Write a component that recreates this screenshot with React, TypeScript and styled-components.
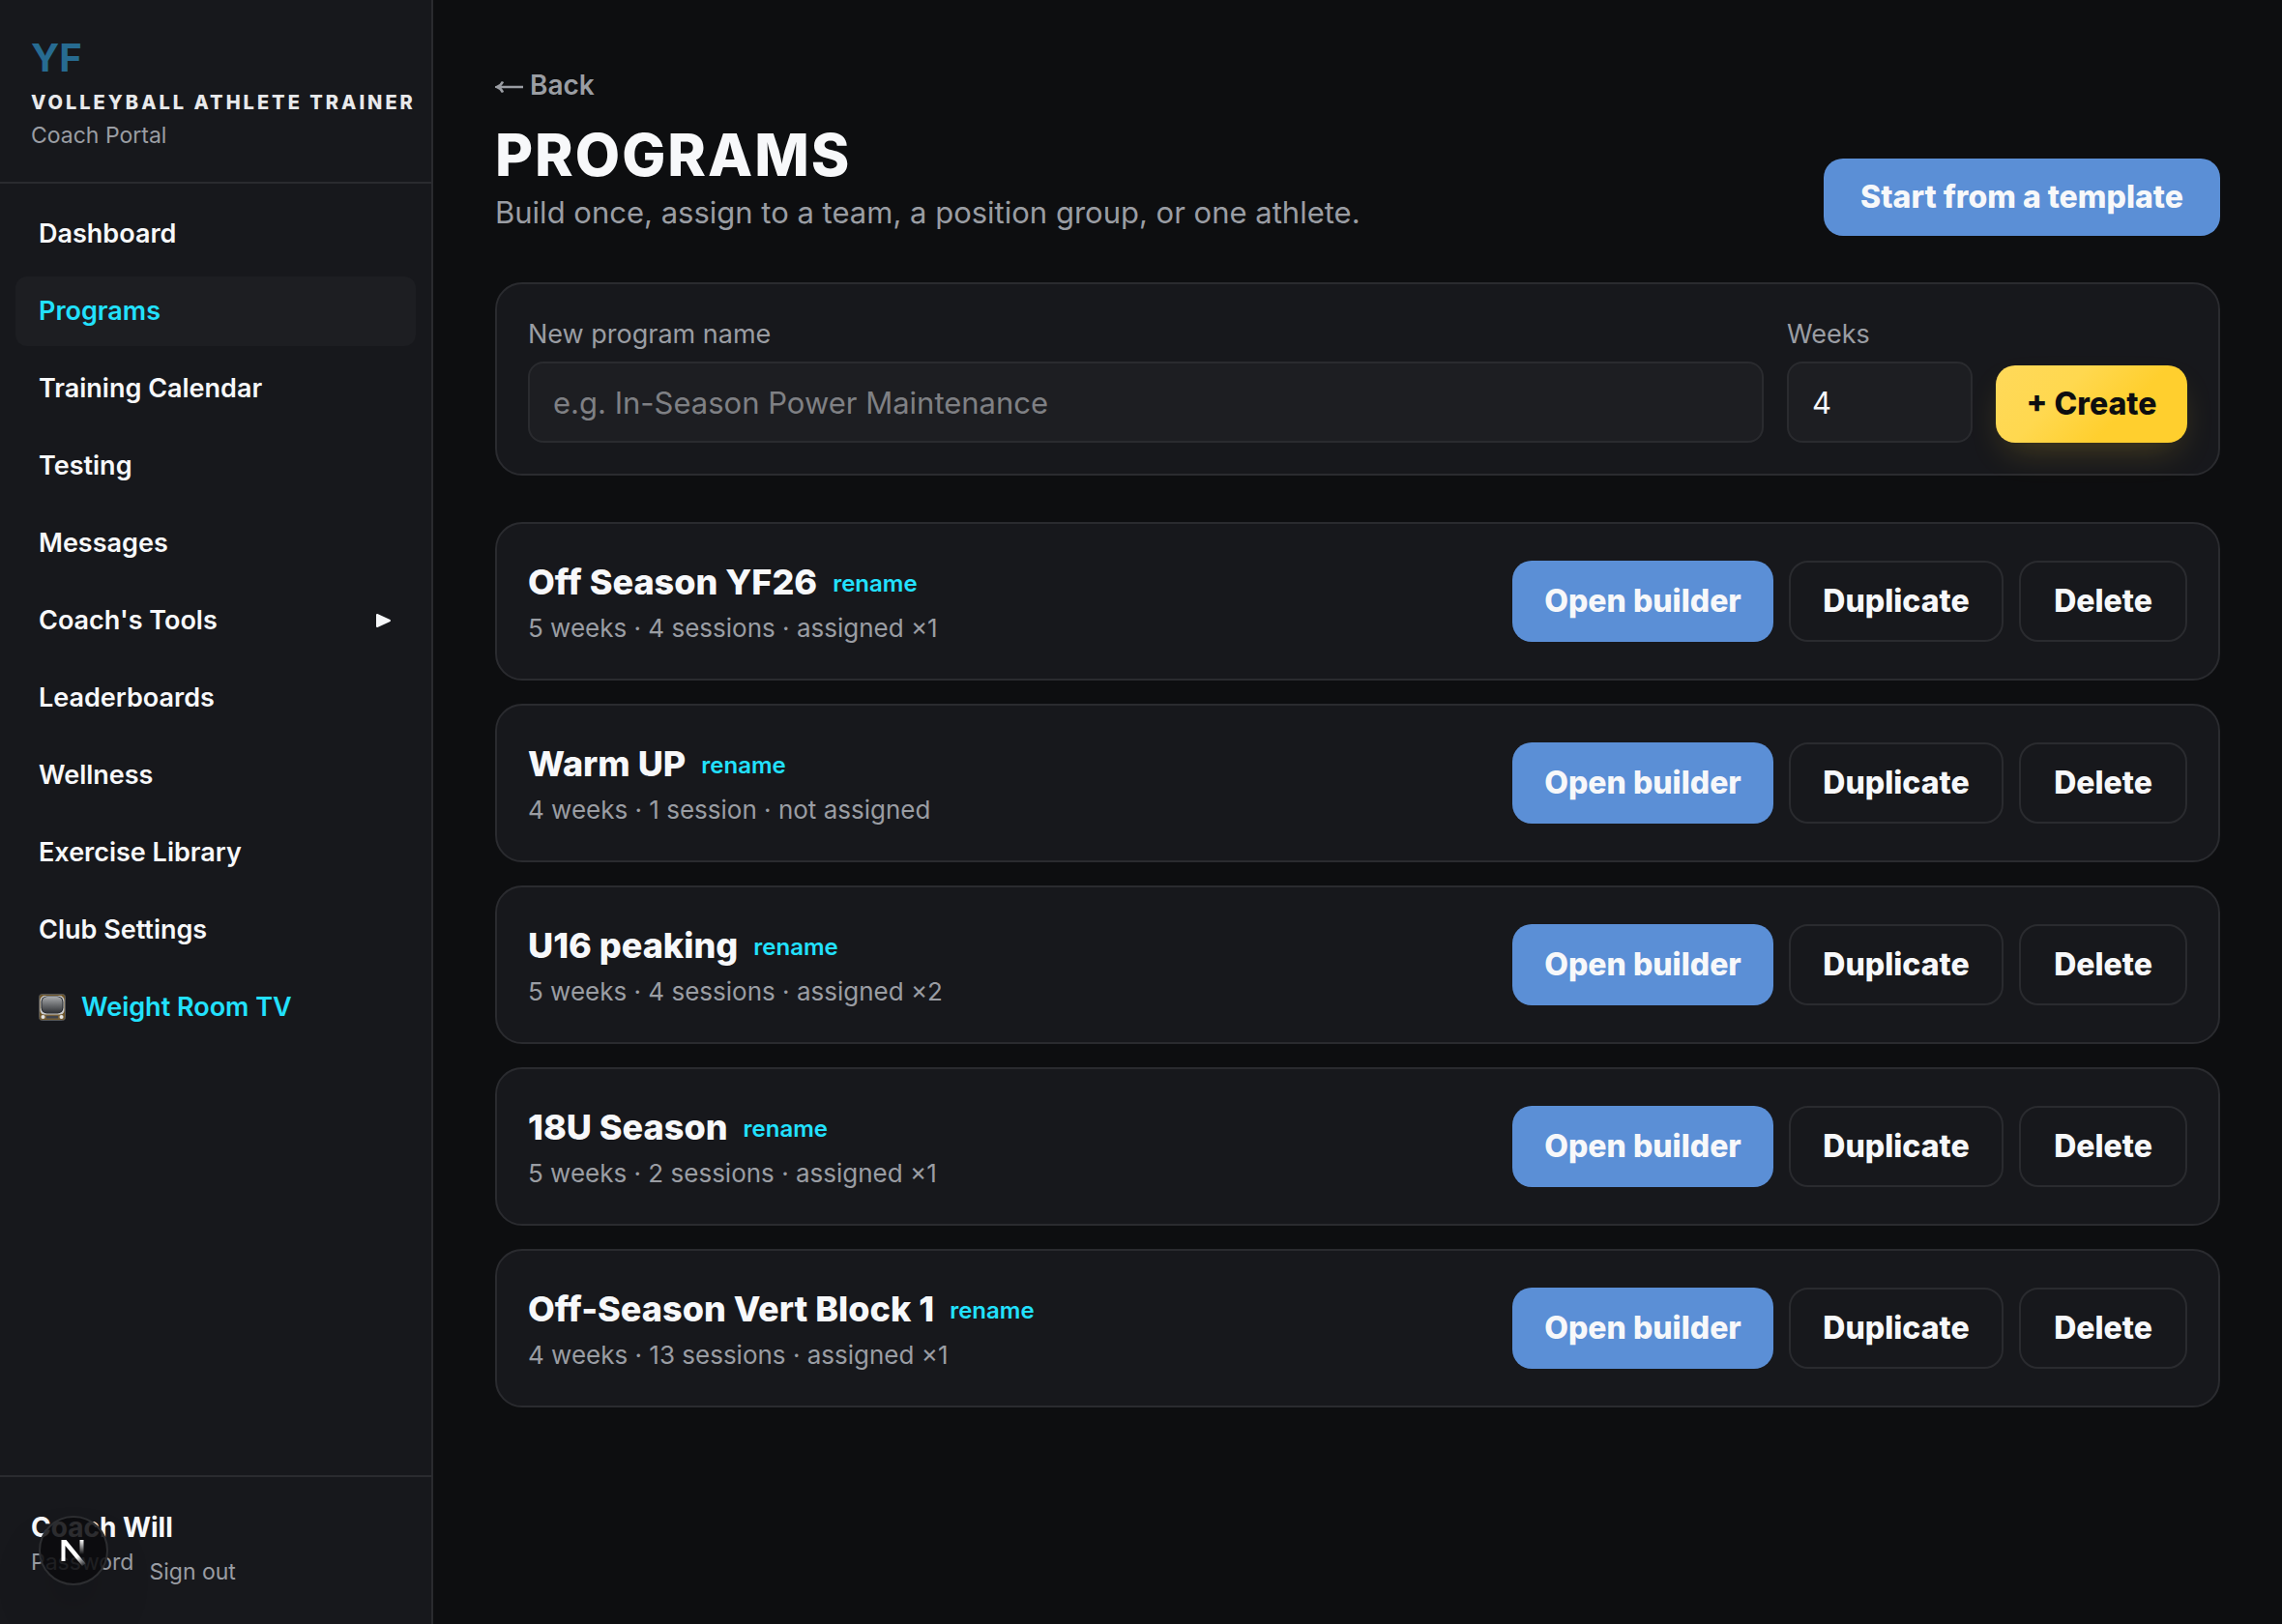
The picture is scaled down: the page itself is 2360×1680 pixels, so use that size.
import React, { useState } from "react";
import styled, { createGlobalStyle } from "styled-components";

const c = {
  bg: "#0d0e10",
  panel: "#17181c",
  raised: "#1d1e22",
  line: "#2a2b2f",
  text: "#f7f8fa",
  muted: "#9a9da3",
  blue: "#5b8fd6",
  cyan: "#22e1ff",
};

const GlobalStyle = createGlobalStyle`
  *, *::before, *::after { box-sizing: border-box; }
  body {
    margin: 0;
    background: ${c.bg};
    color: ${c.text};
    font-family: Inter, "Liberation Sans", sans-serif;
    font-size: 32px;
    line-height: 48px;
    -webkit-font-smoothing: antialiased;
  }
  h1, h2, p, ul { margin: 0; padding: 0; }
  ul { list-style: none; }
  a { color: inherit; text-decoration: none; }
  button, input { font: inherit; color: inherit; }
`;

const Shell = styled.div`
  display: flex;
  min-height: 100vh;
`;

const Sidebar = styled.aside`
  position: sticky;
  top: 0;
  display: flex;
  flex-direction: column;
  flex: 0 0 448px;
  min-width: 0;
  height: 100vh;
  background: ${c.panel};
  border-right: 2px solid ${c.line};
`;

const Brand = styled.div`
  padding: 32px;
  border-bottom: 2px solid ${c.line};
  white-space: nowrap;
`;

const Monogram = styled.div`
  font-size: 40px;
  line-height: 56px;
  font-weight: 700;
  color: #276b91;
`;

const BrandName = styled.div`
  margin: 2px 0;
  font-size: 20px;
  line-height: 32px;
  font-weight: 800;
  letter-spacing: 3px;
  color: #e8e9eb;
`;

const Caption = styled.div`
  font-size: 23px;
  line-height: 32px;
  color: ${c.muted};
`;

const Nav = styled.nav`
  flex: 1;
  padding: 16px;
`;

const NavList = styled.ul`
  display: grid;
  gap: 8px;
`;

const NavLink = styled.a<{ $active?: boolean; $accent?: boolean }>`
  display: flex;
  align-items: center;
  gap: 16px;
  padding: 16px 24px;
  border-radius: 12px;
  font-size: 27px;
  line-height: 40px;
  font-weight: 600;
  color: ${(p) => (p.$active || p.$accent ? c.cyan : c.text)};
  background: ${(p) => (p.$active ? c.raised : "transparent")};
`;

const Caret = styled.svg`
  width: 18px;
  height: 16px;
  margin-left: auto;
`;

const TvIcon = styled.svg`
  width: 28px;
  height: 28px;
`;

const Account = styled.div`
  padding: 32px;
  border-top: 2px solid ${c.line};
`;

const AccountName = styled.div`
  font-size: 28px;
  line-height: 40px;
  font-weight: 700;
`;

const AccountLinks = styled.div`
  display: flex;
  gap: 16px;
  height: 48px;
  font-size: 23px;
  line-height: 32px;
  color: ${c.muted};
`;

const SignOut = styled.button`
  align-self: flex-end;
  padding: 0 0 6px;
  border: 0;
  background: none;
`;

const DevBadge = styled.button`
  position: fixed;
  left: 40px;
  bottom: 40px;
  width: 72px;
  height: 72px;
  padding: 0;
  border: 2px solid #2d2e31;
  border-radius: 50%;
  background: rgba(10, 11, 13, 0.86);
  box-shadow: 0 32px 64px -16px rgba(0, 0, 0, 0.3);

  svg { display: block; width: 100%; height: 100%; }
`;

const Main = styled.main`
  display: flex;
  flex-direction: column;
  flex: 1;
  min-width: 0;
  padding: 64px;
`;

const BackLink = styled.a`
  display: flex;
  align-items: center;
  align-self: flex-start;
  gap: 6px;
  margin-bottom: 12px;
  font-size: 28px;
  font-weight: 600;
  color: ${c.muted};
`;

const BackArrow = styled.svg`
  width: 30px;
  height: 16px;
`;

const PageHeader = styled.header`
  display: flex;
  justify-content: space-between;
  align-items: flex-end;
  margin-bottom: 48px;
`;

const Title = styled.h1`
  font-size: 60px;
  line-height: 72px;
  font-weight: 800;
  letter-spacing: 2px;
`;

const Subtitle = styled.p`
  font-size: 31px;
  color: ${c.muted};
`;

const Button = styled.button<{ $kind: "blue" | "yellow" | "outline"; $width: number }>`
  min-width: ${(p) => p.$width}px;
  padding: 16px 24px;
  border: ${(p) => (p.$kind === "outline" ? `2px solid ${c.line}` : "0")};
  border-radius: 20px;
  font-weight: 800;
  white-space: nowrap;
  color: ${(p) => (p.$kind === "yellow" ? "#0d0e10" : c.text)};
  background: ${(p) =>
    p.$kind === "blue"
      ? c.blue
      : p.$kind === "yellow"
        ? "linear-gradient(135deg, #ffd95a 0%, #ffd84f 35%, #ffcf2e 65%, #ffcf2e 100%)"
        : "transparent"};
  box-shadow: ${(p) => (p.$kind === "yellow" ? "0 16px 36px -12px rgba(255, 207, 46, 0.25)" : "none")};
`;

const Card = styled.section`
  border: 2px solid ${c.line};
  border-radius: 28px;
  padding: 32px;
  background: ${c.panel};
`;

const CreateForm = styled.form`
  display: flex;
  align-items: flex-end;
  gap: 24px;
`;

const Field = styled.label<{ $grow?: boolean }>`
  display: grid;
  gap: 8px;
  flex: ${(p) => (p.$grow ? "1" : "0 0 192px")};
  min-width: 0;
  font-size: 27px;
  line-height: 40px;
  color: ${c.muted};
`;

const TextInput = styled.input`
  width: 100%;
  height: 84px;
  padding: 0 24px;
  border: 2px solid ${c.line};
  border-radius: 16px;
  background: ${c.raised};
  color: ${c.text};
  font-size: 31px;
  outline: none;

  &::placeholder { color: #7f8084; opacity: 1; }
`;

const ProgramList = styled.div`
  display: grid;
  gap: 24px;
  margin-top: 48px;
`;

const ProgramCard = styled(Card)`
  display: flex;
  justify-content: space-between;
  align-items: center;
`;

const ProgramHeading = styled.div`
  display: flex;
  align-items: center;
  gap: 16px;
  line-height: 56px;
`;

const ProgramName = styled.h2`
  font-size: 36px;
  font-weight: 800;
`;

const Rename = styled.button`
  padding: 4px 0 0;
  border: 0;
  background: none;
  font-size: 24px;
  line-height: 32px;
  font-weight: 600;
  color: ${c.cyan};
`;

const Meta = styled.p`
  font-size: 26px;
  line-height: 40px;
  color: ${c.muted};
`;

const Actions = styled.div`
  display: flex;
  align-items: stretch;
  gap: 16px;
`;

const navItems = [
  "Dashboard",
  "Programs",
  "Training Calendar",
  "Testing",
  "Messages",
  "Coach's Tools",
  "Leaderboards",
  "Wellness",
  "Exercise Library",
  "Club Settings",
];

const programs = [
  { name: "Off Season YF26", meta: "5 weeks · 4 sessions · assigned ×1" },
  { name: "Warm UP", meta: "4 weeks · 1 session · not assigned" },
  { name: "U16 peaking", meta: "5 weeks · 4 sessions · assigned ×2" },
  { name: "18U Season", meta: "5 weeks · 2 sessions · assigned ×1" },
  { name: "Off-Season Vert Block 1", meta: "4 weeks · 13 sessions · assigned ×1" },
];

function Television() {
  return (
    <TvIcon viewBox="0 0 28 28" aria-hidden="true">
      <defs>
        <linearGradient id="screen" x1="0" y1="0" x2="0" y2="1">
          <stop offset="0" stopColor="#a9abad" />
          <stop offset="0.5" stopColor="#6b6d70" />
          <stop offset="1" stopColor="#303236" />
        </linearGradient>
      </defs>
      <rect x="0.5" y="0.5" width="27" height="27" rx="3" fill="#6f5526" stroke="#55575a" />
      <rect x="1.5" y="2" width="25" height="20" rx="5" fill="#c9cacc" />
      <rect x="2.5" y="2.5" width="23" height="18" rx="6" fill="#222428" />
      <rect x="3.5" y="3" width="21" height="17" rx="5.5" fill="url(#screen)" />
      <rect x="2" y="21.5" width="24" height="5" rx="1" fill="#77603a" />
      <rect x="8" y="23" width="12" height="2.5" fill="#41444c" />
      <circle cx="4.5" cy="24" r="2" fill="#e4e4e4" />
      <circle cx="23.5" cy="24" r="2" fill="#e4e4e4" />
    </TvIcon>
  );
}

export default function App() {
  const [name, setName] = useState("");
  const [weeks, setWeeks] = useState("4");

  return (
    <>
      <GlobalStyle />
      <Shell>
        <Sidebar>
          <Brand>
            <Monogram>YF</Monogram>
            <BrandName>VOLLEYBALL ATHLETE TRAINER</BrandName>
            <Caption>Coach Portal</Caption>
          </Brand>
          <Nav aria-label="Main">
            <NavList>
              {navItems.map((item) => (
                <li key={item}>
                  <NavLink href="#" $active={item === "Programs"}>
                    {item}
                    {item === "Coach's Tools" && (
                      <Caret viewBox="0 0 18 16" aria-hidden="true">
                        <path d="M2 2v12L15 8z" fill="currentColor" stroke="currentColor" strokeWidth="2" strokeLinejoin="round" />
                      </Caret>
                    )}
                  </NavLink>
                </li>
              ))}
              <li>
                <NavLink href="#" $accent>
                  <Television />
                  Weight Room TV
                </NavLink>
              </li>
            </NavList>
          </Nav>
          <Account>
            <AccountName>Coach Will</AccountName>
            <AccountLinks>
              <a href="#">Password</a>
              <SignOut type="button">Sign out</SignOut>
            </AccountLinks>
          </Account>
        </Sidebar>

        <Main>
          <BackLink href="#">
            <BackArrow viewBox="0 0 30 16" fill="none" aria-hidden="true">
              <path d="M2 10H29M8 4.5Q6 8.5 2 10Q6 11.5 8 15.5" stroke="currentColor" strokeWidth="2.6" />
            </BackArrow>
            Back
          </BackLink>
          <PageHeader>
            <div>
              <Title>PROGRAMS</Title>
              <Subtitle>Build once, assign to a team, a position group, or one athlete.</Subtitle>
            </div>
            <Button type="button" $kind="blue" $width={410}>Start from a template</Button>
          </PageHeader>

          <Card>
            <CreateForm onSubmit={(e) => e.preventDefault()}>
              <Field $grow>
                New program name
                <TextInput
                  value={name}
                  placeholder="e.g. In-Season Power Maintenance"
                  onChange={(e) => setName(e.target.value)}
                />
              </Field>
              <Field>
                Weeks
                <TextInput value={weeks} inputMode="numeric" onChange={(e) => setWeeks(e.target.value)} />
              </Field>
              <Button type="submit" $kind="yellow" $width={198}>+ Create</Button>
            </CreateForm>
          </Card>

          <ProgramList>
            {programs.map((program) => (
              <ProgramCard key={program.name}>
                <div>
                  <ProgramHeading>
                    <ProgramName>{program.name}</ProgramName>
                    <Rename type="button">rename</Rename>
                  </ProgramHeading>
                  <Meta>{program.meta}</Meta>
                </div>
                <Actions>
                  <Button type="button" $kind="blue" $width={270}>Open builder</Button>
                  <Button type="button" $kind="outline" $width={222}>Duplicate</Button>
                  <Button type="button" $kind="outline" $width={174}>Delete</Button>
                </Actions>
              </ProgramCard>
            ))}
          </ProgramList>
        </Main>
      </Shell>

      <DevBadge type="button" aria-label="Open developer tools">
        <svg viewBox="0 0 68 68" aria-hidden="true">
          <defs>
            <linearGradient id="diag" x1="38" y1="40" x2="46" y2="50" gradientUnits="userSpaceOnUse">
              <stop stopColor="#fff" />
              <stop offset="1" stopColor="#fff" stopOpacity="0" />
            </linearGradient>
            <linearGradient id="stem" x1="0" y1="23" x2="0" y2="38" gradientUnits="userSpaceOnUse">
              <stop stopColor="#fff" />
              <stop offset="1" stopColor="#fff" stopOpacity="0" />
            </linearGradient>
          </defs>
          <path d="M21.5 23H26.5L46.5 47.5L43 50L25.5 29V45H21.5Z" fill="url(#diag)" />
          <path d="M40.5 23H44.5V38H40.5Z" fill="url(#stem)" />
        </svg>
      </DevBadge>
    </>
  );
}
